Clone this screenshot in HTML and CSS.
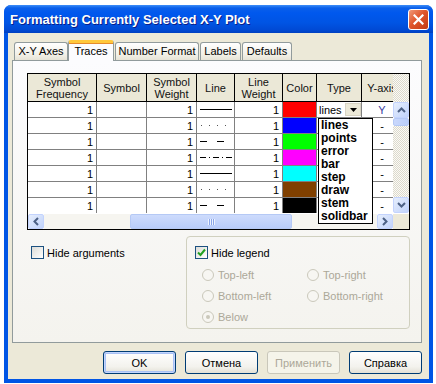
FILE: index.html
```html
<!DOCTYPE html>
<html lang="ru">
<head>
    <meta charset="UTF-8">
    <title>Formatting Currently Selected X-Y Plot</title>
    <link rel="stylesheet" href="styles.css">
</head>
<body>

<div class="window">
    <!-- title bar -->
    <div class="titlebar">
        <span class="title">Formatting Currently Selected X-Y Plot</span>
        <span class="close-btn">
            <svg width="11" height="11" viewBox="0 0 11 11"><path d="M1.5 1.5 L9.5 9.5 M9.5 1.5 L1.5 9.5" stroke="#fff" stroke-width="2.2" stroke-linecap="square"/></svg>
        </span>
    </div>

    <div class="dialog">
        <div class="tabs">
            <div class="tab tab-xy">X-Y Axes</div>
            <div class="tab tab-traces active">Traces</div>
            <div class="tab tab-number">Number Format</div>
            <div class="tab tab-labels">Labels</div>
            <div class="tab tab-defaults">Defaults</div>
        </div>

        <div class="panel">
            <!-- traces grid -->
            <div class="grid">
                <div class="grid-main">
                    <div class="grid-view">
                        <table class="traces">
                            <thead>
                                <tr>
                                    <th class="c-freq">Symbol<br>Frequency</th>
                                    <th class="c-sym">Symbol</th>
                                    <th class="c-sw">Symbol<br>Weight</th>
                                    <th class="c-line">Line</th>
                                    <th class="c-lw">Line<br>Weight</th>
                                    <th class="c-color">Color</th>
                                    <th class="c-type">Type</th>
                                    <th class="c-yaxis">Y-axis</th>
                                </tr>
                            </thead>
                            <tbody>
                                <tr>
                                    <td class="num">1</td><td></td><td class="num">1</td>
                                    <td class="line"><svg width="32" height="15"><line x1="0" y1="7.5" x2="32" y2="7.5" stroke="#000"/></svg></td>
                                    <td class="num">1</td><td class="sw red"></td>
                                    <td class="type"><div class="combo"><span>lines</span><span class="combo-btn"><svg width="7" height="4" viewBox="0 0 7 4"><path d="M0 0 H7 L3.5 4 Z" fill="#000"/></svg></span></div></td>
                                    <td class="yax yax-on">Y</td>
                                </tr>
                                <tr>
                                    <td class="num">1</td><td></td><td class="num">1</td>
                                    <td class="line"><svg width="32" height="15"><line x1="1" y1="7.5" x2="32" y2="7.5" stroke="#555" stroke-dasharray="1 7"/></svg></td>
                                    <td class="num">1</td><td class="sw blue"></td><td></td><td class="yax">-</td>
                                </tr>
                                <tr>
                                    <td class="num">1</td><td></td><td class="num">1</td>
                                    <td class="line"><svg width="32" height="15"><line x1="0" y1="7.5" x2="32" y2="7.5" stroke="#000" stroke-dasharray="7 10"/></svg></td>
                                    <td class="num">1</td><td class="sw green"></td><td></td><td class="yax">-</td>
                                </tr>
                                <tr>
                                    <td class="num">1</td><td></td><td class="num">1</td>
                                    <td class="line"><svg width="32" height="15"><line x1="0" y1="7.5" x2="32" y2="7.5" stroke="#000" stroke-dasharray="6 3 1 3"/></svg></td>
                                    <td class="num">1</td><td class="sw magenta"></td><td></td><td class="yax">-</td>
                                </tr>
                                <tr>
                                    <td class="num">1</td><td></td><td class="num">1</td>
                                    <td class="line"><svg width="32" height="15"><line x1="0" y1="7.5" x2="32" y2="7.5" stroke="#000"/></svg></td>
                                    <td class="num">1</td><td class="sw cyan"></td><td></td><td class="yax">-</td>
                                </tr>
                                <tr>
                                    <td class="num">1</td><td></td><td class="num">1</td>
                                    <td class="line"><svg width="32" height="15"><line x1="1" y1="7.5" x2="32" y2="7.5" stroke="#555" stroke-dasharray="1 7"/></svg></td>
                                    <td class="num">1</td><td class="sw brown"></td><td></td><td class="yax">-</td>
                                </tr>
                                <tr>
                                    <td class="num">1</td><td></td><td class="num">1</td>
                                    <td class="line"><svg width="32" height="15"><line x1="0" y1="7.5" x2="32" y2="7.5" stroke="#000" stroke-dasharray="7 10"/></svg></td>
                                    <td class="num">1</td><td class="sw black"></td><td></td><td class="yax">-</td>
                                </tr>
                            </tbody>
                        </table>
                    </div>

                    <div class="vscroll">
                        <div class="vscroll-top"></div>
                        <div class="sb-btn"><svg width="9" height="6" viewBox="0 0 9 6"><path d="M1 5 L4.5 1.5 L8 5" fill="none" stroke="#4d6185" stroke-width="2"/></svg></div>
                        <div class="sb-thumb v-thumb"></div>
                        <div class="sb-track"></div>
                        <div class="sb-btn"><svg width="9" height="6" viewBox="0 0 9 6"><path d="M1 1 L4.5 4.5 L8 1" fill="none" stroke="#4d6185" stroke-width="2"/></svg></div>
                    </div>
                </div>

                <div class="hscroll">
                    <div class="sb-btn"><svg width="6" height="9" viewBox="0 0 6 9"><path d="M5 1 L1.5 4.5 L5 8" fill="none" stroke="#4d6185" stroke-width="2"/></svg></div>
                    <div class="h-track"><div class="sb-thumb h-thumb"><span class="grip"></span></div></div>
                    <div class="sb-btn"><svg width="6" height="9" viewBox="0 0 6 9"><path d="M1 1 L4.5 4.5 L1 8" fill="none" stroke="#4d6185" stroke-width="2"/></svg></div>
                    <div class="corner"></div>
                </div>

                <!-- open type list -->
                <ul class="type-list">
                    <li>lines</li>
                    <li>points</li>
                    <li>error</li>
                    <li>bar</li>
                    <li>step</li>
                    <li>draw</li>
                    <li>stem</li>
                    <li>solidbar</li>
                </ul>
            </div>

            <div class="options">
                <div class="opt-left">
                    <label class="check"><span class="box"></span>Hide arguments</label>
                </div>
                <div class="group">
                    <label class="check"><span class="box checked"><svg width="9" height="9" viewBox="0 0 9 9"><path d="M1 4.5 L3.5 7 L8 1.5" fill="none" stroke="#21a121" stroke-width="2"/></svg></span>Hide legend</label>
                    <div class="radios">
                        <span class="radio"><span class="dot"></span>Top-left</span>
                        <span class="radio"><span class="dot"></span>Top-right</span>
                        <span class="radio"><span class="dot"></span>Bottom-left</span>
                        <span class="radio"><span class="dot"></span>Bottom-right</span>
                        <span class="radio"><span class="dot on"></span>Below</span>
                    </div>
                </div>
            </div>
        </div>

        <div class="buttons">
            <button class="btn default">OK</button>
            <button class="btn">Отмена</button>
            <button class="btn" disabled>Применить</button>
            <button class="btn">Справка</button>
        </div>
    </div>
</div>

</body>
</html>
```

FILE: styles.css
```css
body {
    margin: 0;
    width: 436px;
    height: 384px;
    overflow: hidden;
    background: #fff;
    font-family: "Liberation Sans", Arial, sans-serif;
    font-size: 11px;
    color: #000;
}

/* window frame */
.window {
    margin: 5px 0 0 4px;
    width: 429px;
    height: 378px;
    background: #0055e5;
    border-radius: 7px 7px 0 0;
    box-sizing: border-box;
    display: flex;
    flex-direction: column;
}

.titlebar {
    height: 28px;
    flex: none;
    border-radius: 7px 7px 0 0;
    background: linear-gradient(#3d8ef8 0, #0a5fea 3px, #0058ee 8px, #0054e3 18px, #0049d4 25px, #0040c0 28px);
    display: flex;
    align-items: center;
    justify-content: space-between;
    padding: 0 4px 0 6px;
}

.title {
    color: #fff;
    font-weight: bold;
    font-size: 13px;
    text-shadow: 1px 1px #0a1e8a;
}

.close-btn {
    width: 19px;
    height: 19px;
    border: 1px solid #fff;
    border-radius: 3px;
    background: linear-gradient(135deg, #f09a7a, #e0562c 45%, #c23a12);
    display: flex;
    align-items: center;
    justify-content: center;
}

.dialog {
    flex: 1;
    margin: 0 4px 4px 4px;
    background: #ece9d8;
    padding: 7px 7px 0 4px;
}

/* tabs */
.tabs {
    height: 20px;
    display: flex;
    align-items: flex-end;
    padding-left: 2px;
}

.tab {
    height: 18px;
    line-height: 17px;
    box-sizing: border-box;
    border: 1px solid #919b9c;
    border-bottom: none;
    border-radius: 3px 3px 0 0;
    background: linear-gradient(#ffffff, #f1efe6 70%, #e6e3d6);
    text-align: center;
    margin-right: 1px;
}

.tab-xy { width: 54px; margin-right: 0; }
.tab-traces { width: 46px; }
.tab-number { width: 84px; }
.tab-labels { width: 41px; }
.tab-defaults { width: 50px; }

.tab.active {
    height: 21px;
    line-height: 17px;
    margin-bottom: -1px;
    background: #fcfcfe;
    border-top: 3px solid #ffc83c;
    box-shadow: inset 0 1px #e68b2c;
    position: relative;
    z-index: 1;
}

.panel {
    height: 283px;
    box-sizing: border-box;
    border: 1px solid #919b9c;
    background: linear-gradient(#fcfcfe, #f4f3ee);
    padding: 12px 0 0 14px;
}

/* grid */
.grid {
    position: relative;
    width: 383px;
    border: 1px solid #000;
    box-sizing: border-box;
    background: #fff;
}

.grid-main {
    display: flex;
    height: 139px;
}

.grid-view {
    width: 365px;
    overflow: hidden;
}

.traces {
    border-collapse: separate;
    border-spacing: 0;
    table-layout: fixed;
    width: 375px;
}

.traces th, .traces td {
    box-sizing: border-box;
    border-right: 1px solid #808080;
    border-bottom: 1px solid #808080;
    padding: 0 3px;
    white-space: nowrap;
    overflow: hidden;
}

.traces th {
    height: 28px;
    background: #ebe8d7;
    border-color: #000;
    font-weight: normal;
    line-height: 12px;
    color: #111;
}

.traces td {
    height: 16px;
    line-height: 14px;
}

.c-freq { width: 69px; }
.c-sym { width: 50px; }
.c-sw { width: 50px; }
.c-line { width: 38px; }
.c-lw { width: 48px; }
.c-color { width: 34px; }
.c-type { width: 45px; }
.c-yaxis { width: 41px; }

.num { text-align: right; }
.line { padding: 0 2px; text-align: center; }
.line svg { display: block; margin: 0 auto; }

.sw.red { background: #ff0000; }
.sw.blue { background: #0000ff; }
.sw.green { background: #00ff00; }
.sw.magenta { background: #ff00ff; }
.sw.cyan { background: #00ffff; }
.sw.brown { background: #804000; }
.sw.black { background: #000000; }

.yax { text-align: center; }
.yax-on { color: #3a3aa0; }

.traces td.type { padding: 0 0 0 2px; }

.combo {
    display: flex;
    align-items: center;
    justify-content: space-between;
}

.combo-btn {
    width: 16px;
    height: 13px;
    box-sizing: border-box;
    border: 1px solid #d8d4c4;
    background: #ece9d8;
    display: flex;
    align-items: center;
    justify-content: center;
}

/* scrollbars */
.vscroll {
    width: 16px;
    display: flex;
    flex-direction: column;
}

.vscroll-top, .sb-track {
    background: repeating-conic-gradient(#dcd9cc 0 25%, #fbfaf6 0 50%) 0 0 / 2px 2px;
}

.vscroll-top { height: 28px; }
.sb-track { flex: 1; }

.sb-btn {
    width: 16px;
    height: 16px;
    flex: none;
    box-sizing: border-box;
    border: 1px solid #c3d3fd;
    border-radius: 2px;
    background: linear-gradient(135deg, #e6eefc, #c1d3fb);
    display: flex;
    align-items: center;
    justify-content: center;
}

.sb-thumb {
    box-sizing: border-box;
    border: 1px solid #b5c9f5;
    border-radius: 2px;
    background: linear-gradient(90deg, #cad8fc, #b9cdfa);
}

.v-thumb { height: 8px; }

.hscroll {
    display: flex;
    height: 15px;
    border-top: 1px solid #fff;
}

.hscroll .sb-btn { height: 15px; }

.h-track {
    flex: 1;
    background: #f6f5f0;
    display: flex;
}

.h-thumb {
    width: 162px;
    margin-left: 86px;
    display: flex;
    align-items: center;
    justify-content: center;
    background: linear-gradient(#cddbfc, #b8ccfa);
}

.grip {
    width: 7px;
    height: 6px;
    background: repeating-linear-gradient(90deg, #eef3fe 0 1px, #8aa6e8 1px 2px);
}

.corner {
    width: 16px;
    background: #ece9d8;
}

.type-list {
    position: absolute;
    left: 290px;
    top: 44px;
    width: 55px;
    margin: 0;
    padding: 0 0 0 2px;
    list-style: none;
    box-sizing: border-box;
    border: 1px solid #000;
    background: #fff;
    font-size: 12px;
    font-weight: bold;
    line-height: 13px;
}

/* options under grid */
.options {
    display: flex;
    margin-top: 6px;
}

.opt-left {
    width: 159px;
    padding: 10px 0 0 4px;
    box-sizing: border-box;
}

.check {
    display: flex;
    align-items: center;
    gap: 3px;
    height: 13px;
}

.box {
    width: 13px;
    height: 13px;
    box-sizing: border-box;
    border: 1px solid #1c5180;
    background: linear-gradient(135deg, #dcdcd7, #ffffff);
    display: flex;
    align-items: center;
    justify-content: center;
}

.group {
    width: 224px;
    height: 93px;
    box-sizing: border-box;
    border: 1px solid #d0d0bf;
    border-radius: 4px;
    padding: 9px 0 0 8px;
}

.radios {
    display: grid;
    grid-template-columns: 105px 100px;
    grid-auto-rows: 21px;
    margin: 9px 0 0 7px;
    color: #aca899;
}

.radio {
    display: flex;
    align-items: center;
    gap: 4px;
    height: 14px;
}

.dot {
    width: 12px;
    height: 12px;
    box-sizing: border-box;
    border: 1px solid #cac8bb;
    border-radius: 50%;
    background: #f7f6f2;
    display: flex;
    align-items: center;
    justify-content: center;
}

.dot.on::after {
    content: "";
    width: 4px;
    height: 4px;
    border-radius: 50%;
    background: #cac8bb;
}

/* buttons */
.buttons {
    display: flex;
    justify-content: flex-end;
    gap: 9px;
    margin-top: 8px;
}

.btn {
    width: 73px;
    height: 23px;
    border: 1px solid #003c74;
    border-radius: 3px;
    background: linear-gradient(#ffffff, #f3f2ed 70%, #e3e1d6);
    font-family: "Liberation Sans", Arial, sans-serif;
    font-size: 11px;
    color: #000;
    padding: 0;
}

.btn.default {
    box-shadow: inset 0 0 0 1px #c3d5fd, inset 0 0 0 2px #a8c1f5;
}

.btn:disabled {
    border-color: #c9c7ba;
    background: #f5f4ea;
    color: #aca899;
}
```
